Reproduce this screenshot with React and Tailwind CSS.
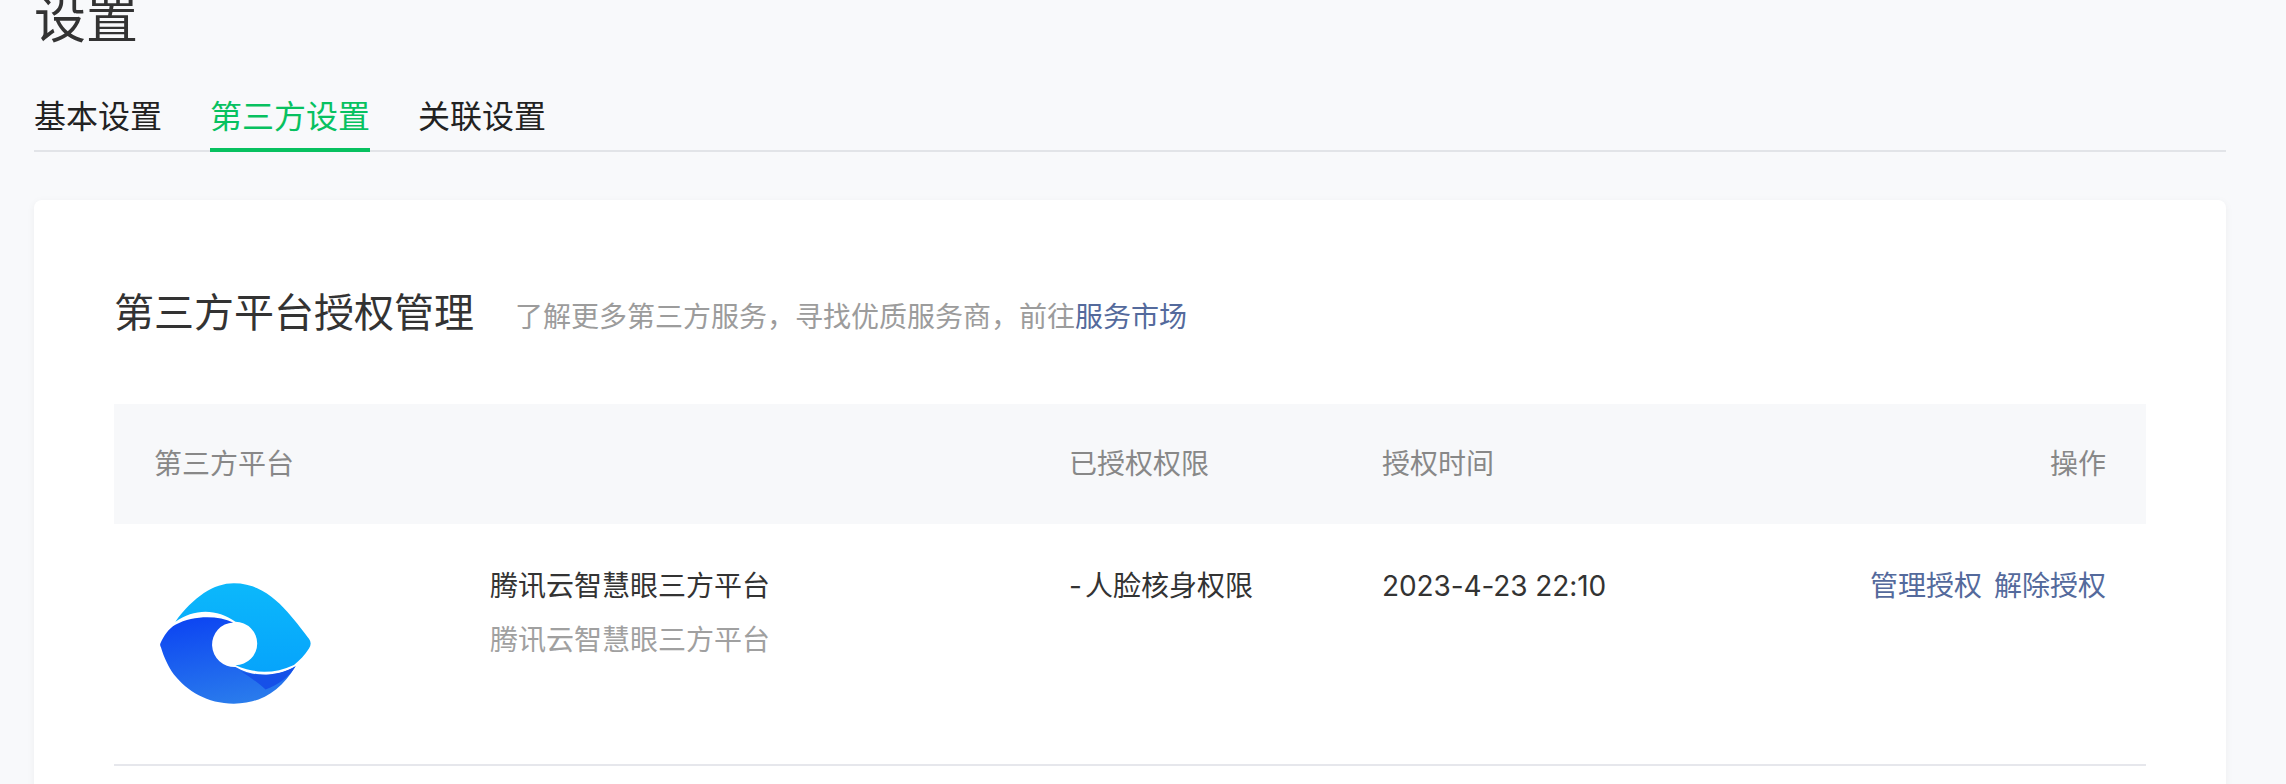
const font = { fontFamily: 'Inter, "Noto Sans CJK SC", sans-serif' };

function Logo() {
  return (
    <svg viewBox="80 60 470 380" className="w-[157px] h-[127px] blur-[0.4px]">
      <defs>
        <linearGradient id="lt" x1="0.5" y1="0" x2="0.5" y2="1">
          <stop offset="0" stopColor="#0cb8fb" />
          <stop offset="1" stopColor="#06a4fb" />
        </linearGradient>
        <linearGradient id="dk" x1="0.3" y1="0" x2="0.6" y2="1">
          <stop offset="0" stopColor="#0d46f2" />
          <stop offset="1" stopColor="#2a7cec" />
        </linearGradient>
      </defs>
      <path d="M90 250C100 228 115 205 135 194C190 165 262 166 308 187A65 65 0 0 0 315 320C370 352 440 352 495 318C450 392 390 430 310 430C230 430 170 392 130 342C115 322 100 290 92 262Q88 256 90 250Z" fill="url(#dk)" />
      <path d="M330 332C375 350 445 348 495 318C475 350 445 372 405 388C385 368 355 348 330 332Z" fill="#1650e8" />
      <path d="M135 185C190 110 250 70 310 70C380 70 430 110 470 155C500 190 522 218 535 236Q545 250 535 265C522 285 508 300 490 314C430 342 370 340 315 315A65 65 0 0 0 315 185C260 145 190 145 135 185Z" fill="url(#lt)" />
    </svg>
  );
}

export default function App() {
  return (
    <div style={font} className="h-[784px] w-[2286px] overflow-hidden bg-[#f8f9fb] px-[34px]">
      <h1 className="mt-[-15px] h-[79px] text-[52px] leading-[70px] font-normal text-[#333]">设置</h1>
      <div className="mt-[31px] w-[2192px] h-[57px] flex gap-[48px] border-b-2 border-[#e2e4e8] text-[32px] text-[#222]">
        <div className="leading-[44px]">基本设置</div>
        <div className="leading-[44px] h-[57px] border-b-[4px] border-[#07c160] text-[#07c160]">第三方设置</div>
        <div className="leading-[44px]">关联设置</div>
      </div>
      <div className="mt-[48px] w-[2192px] h-[700px] rounded-[8px] bg-white shadow-[0_2px_8px_rgba(0,0,0,0.05)] px-[80px] pt-[81px]">
        <div className="flex items-baseline h-[64px]">
          <span className="text-[40px] leading-[64px] text-[#333]">第三方平台授权管理</span>
          <span className="ml-[41px] text-[28px] text-[#9c9c9c]">了解更多第三方服务，寻找优质服务商，前往<span className="text-[#546a9c]">服务市场</span></span>
        </div>
        <div className="mt-[59px] h-[120px] bg-[#f7f8fa] flex items-center px-[40px] text-[28px] text-[#888]">
          <div className="w-[915px]">第三方平台</div>
          <div className="w-[313px]">已授权权限</div>
          <div className="flex-1">授权时间</div>
          <div>操作</div>
        </div>
        <div className="h-[242px] border-b-2 border-[#e6e7ec] flex px-[40px] text-[28px] text-[#333] pt-[40px]">
          <div className="w-[336px] pl-[3px] pt-[16px]"><Logo /></div>
          <div className="w-[579px]">
            <div className="leading-[44px]">腾讯云智慧眼三方平台</div>
            <div className="mt-[10px] leading-[44px] text-[#a0a0a0]">腾讯云智慧眼三方平台</div>
          </div>
          <div className="w-[313px] leading-[44px]"><span className="mr-[3px]">-</span>人脸核身权限</div>
          <div className="flex-1 leading-[44px] tracking-[-0.1px]">2023-4-23 22:10</div>
          <div className="leading-[44px] text-[#546a9c] flex gap-[12px]"><span>管理授权</span><span>解除授权</span></div>
        </div>
      </div>
    </div>
  );
}
